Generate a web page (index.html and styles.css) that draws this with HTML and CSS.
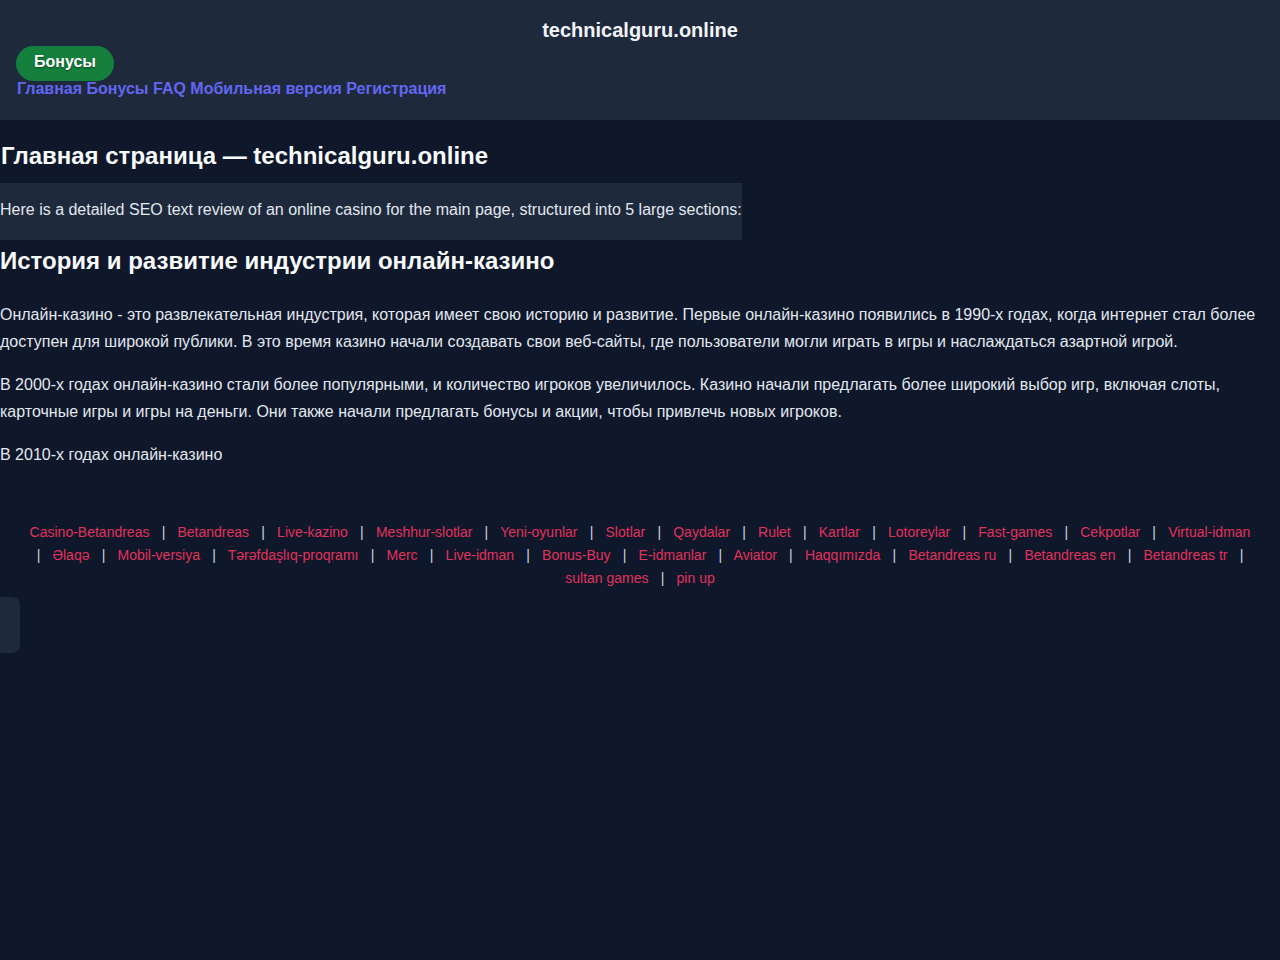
FILE: index.html
```html
<!DOCTYPE html>
<html lang="ru">
<head>
<meta charset="utf-8">
<title>technicalguru.online</title>
<link rel="stylesheet" href="styles.css">
</head>
<body>
<header class="site-header">
  <div class="site-title">technicalguru.online</div>
  <a class="btn-bonus" href="#">Бонусы</a>
  <nav class="main-nav"><a href="#">Главная</a> <a href="#">Бонусы</a> <a href="#">FAQ</a> <a href="#">Мобильная версия</a> <a href="#">Регистрация</a></nav>
</header>
<main class="content">
  <h1 class="page-title">Главная страница — technicalguru.online</h1>
  <div class="intro">Here is a detailed SEO text review of an online casino for the main page, structured into 5 large sections:</div>
  <h2 class="section-title">История и развитие индустрии онлайн-казино</h2>
  <p>Онлайн-казино - это развлекательная индустрия, которая имеет свою историю и развитие. Первые онлайн-казино появились в 1990-х годах, когда интернет стал более доступен для широкой публики. В это время казино начали создавать свои веб-сайты, где пользователи могли играть в игры и наслаждаться азартной игрой.</p>
  <p>В 2000-х годах онлайн-казино стали более популярными, и количество игроков увеличилось. Казино начали предлагать более широкий выбор игр, включая слоты, карточные игры и игры на деньги. Они также начали предлагать бонусы и акции, чтобы привлечь новых игроков.</p>
  <p>В 2010-х годах онлайн-казино</p>
</main>
<footer class="footer-links">
<a href="#">Casino-Betandreas</a> <span class="sep">|</span> <a href="#">Betandreas</a> <span class="sep">|</span> <a href="#">Live-kazino</a> <span class="sep">|</span> <a href="#">Meshhur-slotlar</a> <span class="sep">|</span> <a href="#">Yeni-oyunlar</a> <span class="sep">|</span> <a href="#">Slotlar</a> <span class="sep">|</span> <a href="#">Qaydalar</a> <span class="sep">|</span> <a href="#">Rulet</a> <span class="sep">|</span> <a href="#">Kartlar</a> <span class="sep">|</span> <a href="#">Lotoreylar</a> <span class="sep">|</span> <a href="#">Fast-games</a> <span class="sep">|</span> <a href="#">Cekpotlar</a> <span class="sep">|</span> <a href="#">Virtual-idman</a> <span class="sep">|</span> <a href="#">Əlaqə</a> <span class="sep">|</span> <a href="#">Mobil-versiya</a> <span class="sep">|</span> <a href="#">Tərəfdaşlıq-proqramı</a> <span class="sep">|</span> <a href="#">Merc</a> <span class="sep">|</span> <a href="#">Live-idman</a> <span class="sep">|</span> <a href="#">Bonus-Buy</a> <span class="sep">|</span> <a href="#">E-idmanlar</a> <span class="sep">|</span> <a href="#">Aviator</a> <span class="sep">|</span> <a href="#">Haqqımızda</a> <span class="sep">|</span> <a href="#">Betandreas ru</a> <span class="sep">|</span> <a href="#">Betandreas en</a> <span class="sep">|</span> <a href="#">Betandreas tr</a> <span class="sep">|</span> <a href="#">sultan games</a> <span class="sep">|</span> <a href="#">pin up</a>
</footer>
<div class="side-box"></div>
</body>
</html>
```
FILE: styles.css
```css
html, body {
  margin: 0;
  padding: 0;
  background: #0f172a;
  color: #e2e8f0;
  font-family: "Liberation Sans", Arial, sans-serif;
}

.site-header {
  background: #1e293b;
  padding: 16px 16px 22px;
}

.site-title {
  text-align: center;
  font-size: 20px;
  font-weight: bold;
  line-height: 28px;
  color: #f1f5f9;
}

.btn-bonus {
  display: block;
  width: fit-content;
  margin-top: 2px;
  margin-bottom: -1px;
  padding: 6px 18px 10px;
  line-height: 19px;
  font-size: 16px;
  font-weight: bold;
  color: #ffffff;
  background: #15803d;
  border-radius: 18px;
  text-decoration: none;
  text-shadow: 0 1px 2px rgba(0, 0, 0, 0.5);
}

.main-nav {
  display: block;
  line-height: 18px;
  padding-left: 1px;
}

.main-nav a {
  font-size: 16px;
  font-weight: bold;
  color: #6366f1;
  text-decoration: none;
}

.content {
  padding: 0;
}

.page-title {
  margin: 22px 0 13px;
  font-size: 24px;
  line-height: 28px;
  font-weight: bold;
  color: #f8fafc;
  padding-left: 1px;
}

.intro {
  display: inline-block;
  background: #1e293b;
  padding: 14px 0 18px;
  font-size: 16px;
  line-height: 25px;
  color: #e2e8f0;
}

.section-title {
  margin: 7px 0 26px;
  font-size: 24px;
  line-height: 28px;
  font-weight: bold;
  color: #f8fafc;
}

.content p {
  margin: 0 0 16px;
  font-size: 16px;
  line-height: 27px;
  color: #e2e8f0;
}

.footer-links {
  margin-top: 53px;
  padding: 0 20px;
  text-align: center;
  font-size: 14px;
  line-height: 23px;
}

.footer-links a {
  color: #e0325c;
  text-decoration: none;
  white-space: nowrap;
}

.footer-links .sep {
  color: #cbd5e1;
  margin: 0 8.3px;
}

.side-box {
  width: 20px;
  height: 56px;
  margin-top: 7px;
  background: #1e293b;
  border-radius: 0 8px 8px 0;
}
```
